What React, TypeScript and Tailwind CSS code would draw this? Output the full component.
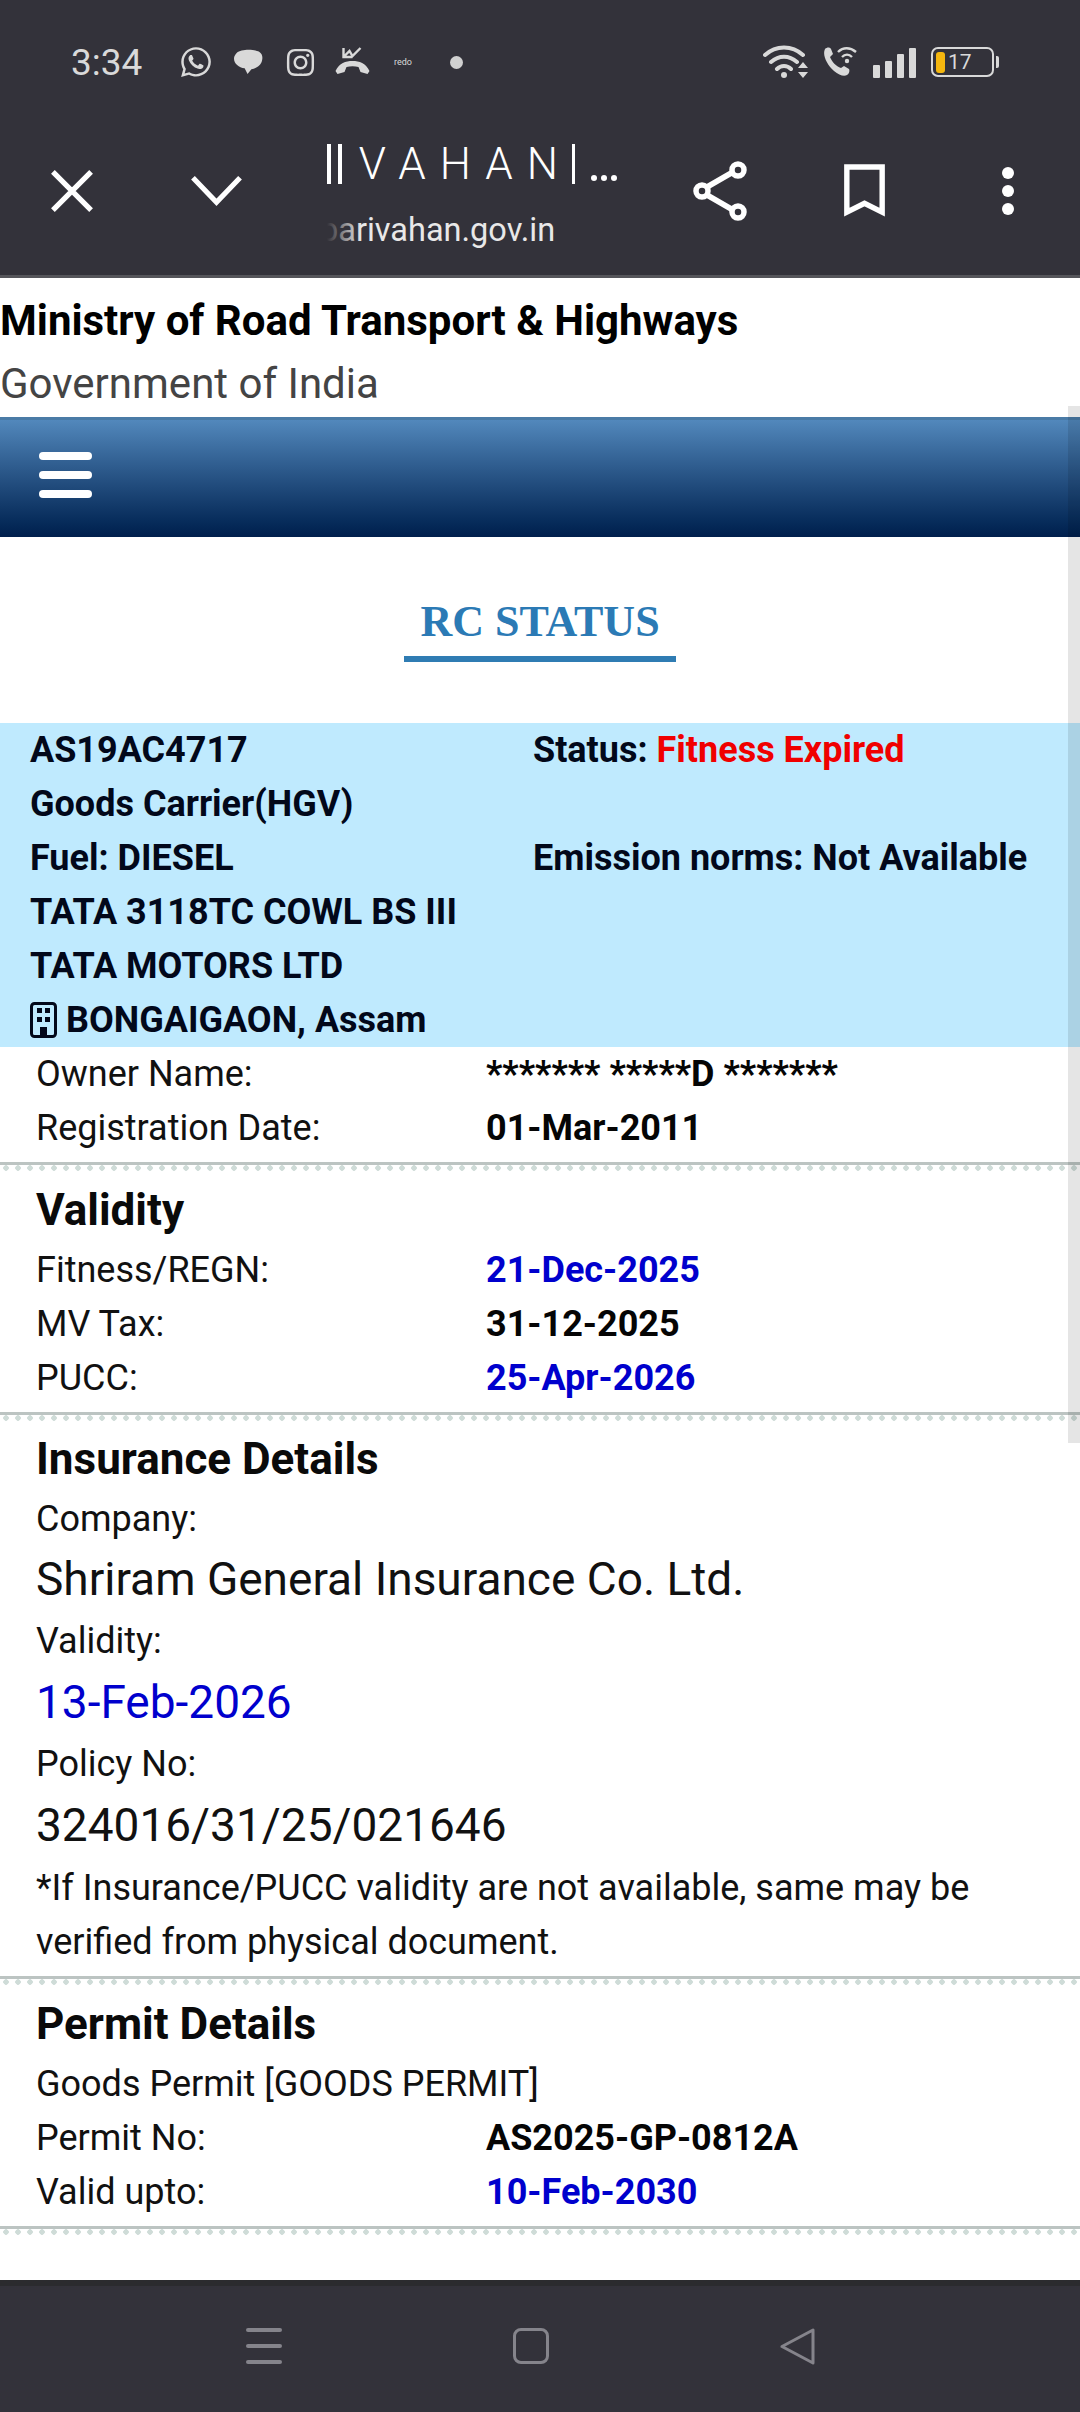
import { FaInstagram, FaWhatsapp } from "react-icons/fa";

const blue = "text-[#0000cd]";

function Divider() {
  return (
    <div className="mt-[7px]">
      <div className="h-[3px] bg-[#bcc4c2]" />
      <div className="h-[6px] bg-[radial-gradient(circle,#cfdcd8_2.5px,transparent_3px)] bg-[length:12px_6px]" />
    </div>
  );
}

function Row({ label, value, color }: { label: string; value: string; color?: string }) {
  return (
    <div className="flex h-[54px] items-center pl-[36px]">
      <div className="w-[450px]">{label}</div>
      <div className={`font-bold ${color ?? "text-[#050505]"}`}>{value}</div>
    </div>
  );
}

function Heading({ children }: { children: string }) {
  return <div className="flex h-[66px] items-center pl-[36px] text-[44px] font-bold leading-none text-[#0a0a0a]">{children}</div>;
}

function StatusBar() {
  return (
    <div className="flex h-[124px] items-center pl-[71px] pr-[81px] text-[#d9d9d9]">
      <div className="w-[108px] text-[37px] leading-none">3:34</div>
      <FaWhatsapp className="size-[34px]" />
      <svg viewBox="0 0 30 30" className="ml-[21px] size-[29px]" fill="currentColor">
        <path d="M3 5c4-4 18-4 23-1 3 2 4 5 3 9-1 5-6 8-11 9l-4 5-3-6C5 20 0 16 0 11c0-2 1-4 3-6z" />
      </svg>
      <FaInstagram className="ml-[22px] size-[31px]" />
      <svg viewBox="0 0 36 30" className="ml-[18px] h-[30px] w-[37px]" fill="currentColor">
        <path d="M1 24c4-8 10-10 17-10s13 2 17 10l-2 3-7-2-2-5c-4-1-8-1-12 0l-2 5-7 2z" />
        <path d="M9 1v9h9M9 10l6-6 3 5 8-8" fill="none" stroke="currentColor" strokeWidth="2.4" />
      </svg>
      <div className="ml-[23px] w-[21px] text-[9px] leading-none">redo</div>
      <div className="ml-[35px] size-[13px] rounded-full bg-[#d0d0d0]" />
      <div className="ml-auto flex items-center">
        <svg viewBox="0 0 45 36" className="h-[36px] w-[45px]" fill="none" stroke="currentColor" strokeWidth="4" strokeLinecap="round">
          <path d="M2 11c11-10 27-10 38 0M8 18c8-7 18-7 26 0M14 25c4-4 10-4 14 0" />
          <circle cx="21" cy="31" r="3" fill="currentColor" stroke="none" />
          <path d="M35 24l5-6 5 6zM35 28l5 6 5-6z" fill="currentColor" stroke="none" />
        </svg>
        <svg viewBox="0 0 34 32" className="ml-[15px] h-[32px] w-[34px]" fill="currentColor">
          <path d="M2 3c2-2 5-2 6 0l2 5-3 3c2 5 6 9 11 11l3-2 5 3c1 2 0 5-2 6-3 2-8 0-13-4C4 19-1 9 2 3z" />
          <path d="M15 6c5-5 12-5 18 0M19 11c3-3 7-3 10 0" fill="none" stroke="currentColor" strokeWidth="2.4" />
          <circle cx="24" cy="15" r="2.2" />
        </svg>
        <div className="ml-[16px] flex h-[32px] items-end gap-[5px]">
          <div className="h-[13px] w-[7px] rounded-[1px] bg-[#d9d9d9]" />
          <div className="h-[17px] w-[7px] rounded-[1px] bg-[#d9d9d9]" />
          <div className="h-[24px] w-[7px] rounded-[1px] bg-[#d9d9d9]" />
          <div className="h-[30px] w-[7px] rounded-[1px] bg-[#d9d9d9]" />
        </div>
        <div className="ml-[15px] flex items-center">
          <div className="flex h-[30px] w-[63px] items-center rounded-[7px] border-2 border-[#d9d9d9] px-[3px]">
            <div className="h-[21px] w-[9px] rounded-[3px] bg-[#f5b70f]" />
            <span className="ml-[3px] text-[21px] leading-none">17</span>
          </div>
          <div className="ml-[2px] h-[12px] w-[3px] rounded-r-[2px] bg-[#d9d9d9]" />
        </div>
      </div>
    </div>
  );
}

function Toolbar() {
  return (
    <div className="relative flex h-[151px] items-start text-white">
      <svg viewBox="0 0 44 44" className="ml-[51px] mt-[46px] size-[42px]" stroke="currentColor" strokeWidth="5.5" fill="none">
        <path d="M2 2l40 40M42 2L2 42" />
      </svg>
      <svg viewBox="0 0 54 34" className="ml-[97px] mt-[51px] h-[32px] w-[53px]" stroke="currentColor" strokeWidth="5.5" fill="none">
        <path d="M2 3l25 26L52 3" />
      </svg>
      <div className="relative ml-[84px] mt-[20px] w-[290px] overflow-hidden">
        <div className="flex h-[40px] items-center whitespace-nowrap text-[44px] font-light leading-none">
          <div className="mr-[7px] h-[40px] w-[5px] bg-white" />
          <div className="mr-[17px] h-[40px] w-[5px] bg-white" />
          <span className="tracking-[14px]">VAHAN</span>
          <div className="h-[40px] w-[4px] bg-white" />
          <span className="ml-[16px] flex gap-[4px] self-end pb-[3px]">
            <span className="size-[6px] rounded-full bg-white" />
            <span className="size-[6px] rounded-full bg-white" />
            <span className="size-[6px] rounded-full bg-white" />
          </span>
        </div>
        <div className="-ml-[7px] mt-[26px] whitespace-nowrap text-[32.5px] leading-[40px] text-[#e8e8e8]">parivahan.gov.in</div>
        <div className="absolute bottom-0 left-0 h-[44px] w-[34px] bg-gradient-to-r from-[#33323a] to-transparent" />
      </div>
      <svg viewBox="0 0 56 60" className="ml-[75px] mt-[37px] h-[60px] w-[56px]" fill="none" stroke="currentColor" strokeWidth="5.5">
        <path d="M15 26L41 11M15 34l26 15" />
        <circle cx="46" cy="9" r="6" />
        <circle cx="10" cy="30" r="6" />
        <circle cx="46" cy="51" r="6" />
      </svg>
      <svg viewBox="0 0 42 54" className="ml-[95px] mt-[40px] h-[53px] w-[43px]" fill="none" stroke="currentColor" strokeWidth="5.5">
        <path d="M3 3h36v46L21 40 3 49z" />
      </svg>
      <div className="ml-[116px] mt-[43px] flex flex-col gap-[6px]">
        <div className="size-[12px] rounded-full bg-white" />
        <div className="size-[12px] rounded-full bg-white" />
        <div className="size-[12px] rounded-full bg-white" />
      </div>
    </div>
  );
}

export default function App() {
  return (
    <div className="relative flex h-[2412px] w-[1080px] flex-col overflow-hidden bg-white font-['Roboto',sans-serif] text-[36px] leading-[54px] text-[#111]">
      <header className="bg-[#33323a]">
        <StatusBar />
        <Toolbar />
        <div className="h-[3px] bg-[#55555a]" />
      </header>

      <div className="flex-1">
        <div className="flex h-[86px] items-center text-[42px] font-bold leading-none text-black">Ministry of Road Transport &amp; Highways</div>
        <div className="flex h-[40px] items-center text-[42px] leading-none text-[#444]">Government of India</div>
        <div className="mt-[13px] flex h-[120px] items-start border-t-[3px] border-[#4a7ba6] bg-gradient-to-b from-[#5288bc] to-[#001f4d] pl-[39px] pt-[32px]">
          <div className="flex w-[53px] flex-col gap-[11px]">
            <div className="h-[8px] rounded-full bg-white" />
            <div className="h-[8px] rounded-full bg-white" />
            <div className="h-[8px] rounded-full bg-white" />
          </div>
        </div>

        <div className="flex justify-center pt-[58px]">
          <div className="border-b-[6px] border-[#2f7cb3] px-[16px] pb-[7px] font-['Liberation_Serif',serif] text-[44px] font-bold leading-[54px] text-[#2b7ab5]">RC STATUS</div>
        </div>

        <div className="mt-[61px] bg-[#bfeafe] pl-[30px] font-bold text-[#02081a]">
          <div className="flex h-[54px] items-center">
            <div className="w-[503px]">AS19AC4717</div>
            <div>Status: <span className="text-[#f00000]">Fitness Expired</span></div>
          </div>
          <div className="flex h-[54px] items-center">Goods Carrier(HGV)</div>
          <div className="flex h-[54px] items-center">
            <div className="w-[503px]">Fuel: DIESEL</div>
            <div>Emission norms: Not Available</div>
          </div>
          <div className="flex h-[54px] items-center">TATA 3118TC COWL BS III</div>
          <div className="flex h-[54px] items-center">TATA MOTORS LTD</div>
          <div className="flex h-[54px] items-center">
            <svg viewBox="0 0 27 36" className="mr-[9px] h-[36px] w-[27px]">
              <rect x="1.5" y="1.5" width="24" height="33" rx="3" fill="none" stroke="#02081a" strokeWidth="3" />
              <rect x="7" y="6" width="5" height="5" fill="#02081a" />
              <rect x="15" y="6" width="5" height="5" fill="#02081a" />
              <rect x="7" y="15" width="5" height="5" fill="#02081a" />
              <rect x="15" y="15" width="5" height="5" fill="#02081a" />
              <rect x="10" y="25" width="7" height="10" fill="#02081a" />
            </svg>
            BONGAIGAON, Assam
          </div>
        </div>

        <Row label="Owner Name:" value="******* *****D *******" />
        <Row label="Registration Date:" value="01-Mar-2011" />
        <Divider />

        <div className="mt-[6px]">
          <Heading>Validity</Heading>
          <Row label="Fitness/REGN:" value="21-Dec-2025" color={blue} />
          <Row label="MV Tax:" value="31-12-2025" />
          <Row label="PUCC:" value="25-Apr-2026" color={blue} />
        </div>
        <Divider />

        <div className="mt-[5px]">
          <Heading>Insurance Details</Heading>
          <div className="flex h-[54px] items-center pl-[36px]">Company:</div>
          <div className="flex h-[66px] items-center pl-[36px] text-[46px]">Shriram General Insurance Co. Ltd.</div>
          <div className="flex h-[58px] items-center pl-[36px]">Validity:</div>
          <div className={`flex h-[64px] items-center pl-[36px] text-[46px] ${blue}`}>13-Feb-2026</div>
          <div className="flex h-[60px] items-center pl-[36px]">Policy No:</div>
          <div className="flex h-[62px] items-center pl-[36px] text-[46px]">324016/31/25/021646</div>
          <div className="mt-[5px] pl-[36px]">
            *If Insurance/PUCC validity are not available, same may be
            <br />
            verified from physical document.
          </div>
        </div>
        <Divider />

        <div className="mt-[6px]">
          <Heading>Permit Details</Heading>
          <div className="flex h-[54px] items-center pl-[36px]">Goods Permit [GOODS PERMIT]</div>
          <Row label="Permit No:" value="AS2025-GP-0812A" />
          <Row label="Valid upto:" value="10-Feb-2030" color={blue} />
        </div>
        <Divider />
      </div>

      <footer className="flex h-[132px] items-center justify-center gap-[231px] border-t-[6px] border-[#2b2b2e] bg-[#33323a] pb-[6px] pr-[19px] text-[#85848b]">
        <div className="flex w-[36px] flex-col gap-[12px]">
          <div className="h-[4px] rounded-full bg-[#85848b]" />
          <div className="h-[4px] rounded-full bg-[#85848b]" />
          <div className="h-[4px] rounded-full bg-[#85848b]" />
        </div>
        <div className="size-[36px] rounded-[8px] border-[3px] border-[#85848b]" />
        <svg viewBox="0 0 36 37" className="h-[37px] w-[36px]" fill="none" stroke="currentColor" strokeWidth="3" strokeLinejoin="round">
          <path d="M33 2v33L2 18.5z" />
        </svg>
      </footer>

      <div className="absolute bottom-[969px] right-0 top-[406px] w-[12px] bg-black/10" />
    </div>
  );
}
